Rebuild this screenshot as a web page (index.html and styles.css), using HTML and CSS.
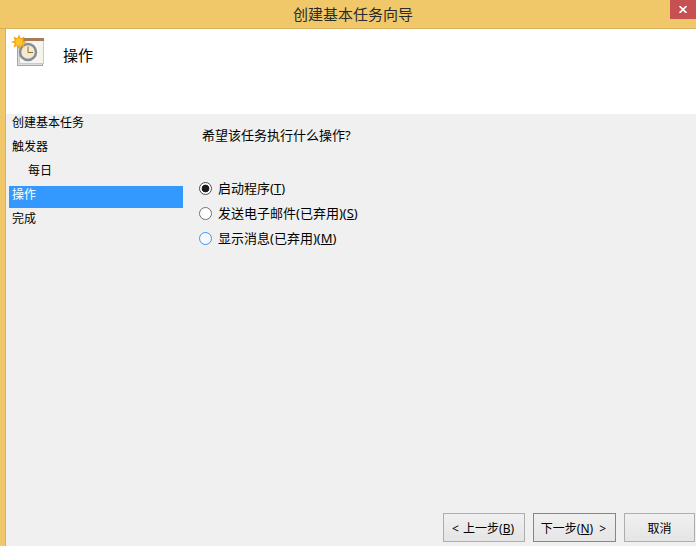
FILE: index.html
```html
<!DOCTYPE html>
<html lang="zh-CN">
<head>
<meta charset="utf-8">
<title>创建基本任务向导</title>
<link rel="stylesheet" href="styles.css">
</head>
<body>
<div class="window">
  <div class="titlebar">
    <span class="title">创建基本任务向导</span>
    <span class="close"><svg width="8" height="7" viewBox="0 0 8 7"><path d="M0.500 0 L7.500 7 M7.500 0 L0.500 7" stroke="#fff" stroke-width="1.700" fill="none"/></svg></span>
  </div>
  <div class="client">
    <div class="header">
      <svg class="task-icon" width="32" height="32" viewBox="0 0 32 32">
        <rect x="5.500" y="5.500" width="25" height="24" fill="#dfddd8" stroke="#a5a5a5"/>
        <rect x="7.500" y="3.500" width="24" height="24" fill="#f6f4ef" stroke="#cfcbc2"/>
        <rect x="8" y="2" width="24" height="3" fill="#a87a5c"/>
        <circle cx="16" cy="16" r="8" fill="#f5ead0" stroke="#868d96" stroke-width="2.500"/>
        <path d="M16 10.500V16.500H21" stroke="#8a6a30" stroke-width="1" fill="none"/>
        <path d="M7 -1.500 L8.700 2.300 L12.500 0.500 L11.300 4.500 L15 6 L11.300 7.500 L12.500 11.500 L8.700 9.700 L7 13.500 L5.300 9.700 L1.500 11.500 L2.700 7.500 L-1 6 L2.700 4.500 L1.500 0.500 L5.300 2.300 Z" fill="#f5a811"/>
        <circle cx="7" cy="6" r="3.500" fill="#ffc52e"/>
      </svg>
      <span class="header-text">操作</span>
    </div>
    <div class="main">
      <nav class="steps">
        <div class="step">创建基本任务</div>
        <div class="step">触发器</div>
        <div class="step step-sub">每日</div>
        <div class="step step-active">操作</div>
        <div class="step">完成</div>
      </nav>
      <section class="content">
        <p class="question">希望该任务执行什么操作?</p>
        <div class="options">
          <div class="option"><span class="radio radio-on"></span><span>启动程序(<u>T</u>)</span></div>
          <div class="option"><span class="radio"></span><span>发送电子邮件(已弃用)(<u>S</u>)</span></div>
          <div class="option"><span class="radio radio-hover"></span><span>显示消息(已弃用)(<u>M</u>)</span></div>
        </div>
      </section>
    </div>
    <div class="footer">
      <button class="btn btn-back">&lt;&nbsp; 上一步(<u>B</u>)</button>
      <button class="btn btn-next">下一步(<u>N</u>) &nbsp;&gt;</button>
      <button class="btn btn-cancel">取消</button>
    </div>
  </div>
</div>
</body>
</html>
```
FILE: styles.css
```css
* { box-sizing: border-box; }
html, body { margin: 0; height: 100%; overflow: hidden; }
body { font-family: "Noto Sans", "Noto Sans CJK SC", sans-serif; font-size: 12px; color: #000; }
.window { width: 696px; height: 546px; display: flex; flex-direction: column; background: #f0c869; }
.titlebar { height: 29px; flex: none; display: flex; justify-content: center; align-items: center; position: relative; border-bottom: 1px solid #d9b25f; padding: 0 0 1px 10px; }
.title { font-size: 15px; line-height: 20px; color: #2b2b2b; }
.close { position: absolute; top: 0; right: 0; width: 26px; height: 19px; background: #c75050; display: flex; align-items: center; justify-content: center; }
.client { flex: 1; min-height: 0; margin-left: 5px; border-left: 1px solid #d9b25f; background: #f0f0f0; display: flex; flex-direction: column; }
.header { height: 85px; flex: none; background: #fff; display: flex; align-items: flex-start; padding: 7px 0 0 6px; }
.task-icon { display: block; overflow: visible; }
.header-text { font-size: 15px; line-height: 20px; margin: 9px 0 0 19px; }
.main { flex: 1; min-height: 0; display: flex; }
.steps { width: 177px; flex: none; padding-left: 3px; }
.step { height: 22px; margin-bottom: 2px; padding-left: 3px; line-height: 18px; }
.step-sub { padding-left: 19px; }
.step-active { background: #3399ff; color: #fff; }
.content { flex: 1; padding: 12px 0 0 19px; }
.question { margin: 0; font-size: 13px; line-height: 18px; }
.options { margin-top: 35px; margin-left: -3px; display: flex; flex-direction: column; gap: 7px; font-size: 13px; }
.option { height: 18px; display: flex; align-items: center; gap: 6px; line-height: 18px; }
.radio { width: 13px; height: 13px; border-radius: 50%; border: 1px solid #707070; background: #fff; flex: none; }
.radio-on { background: radial-gradient(circle, #1a1a1a 0 3.500px, #fff 4.200px); border-color: #4d4d4d; }
.radio-hover { border-color: #3399ff; background: #f4f9ff; }
.footer { height: 33px; flex: none; display: flex; justify-content: flex-end; gap: 8px; padding-right: 1px; }
.btn { height: 29px; font: inherit; color: #000; background: linear-gradient(#f0f0f0, #e5e5e5); border: 1px solid #adadad; border-radius: 0; padding: 0; }
.btn-back { width: 82px; padding-right: 2px; word-spacing: -1px; }
.btn-next { width: 83px; border-color: #3399ff; padding-right: 2px; }
.btn-cancel { width: 71px; }
```
